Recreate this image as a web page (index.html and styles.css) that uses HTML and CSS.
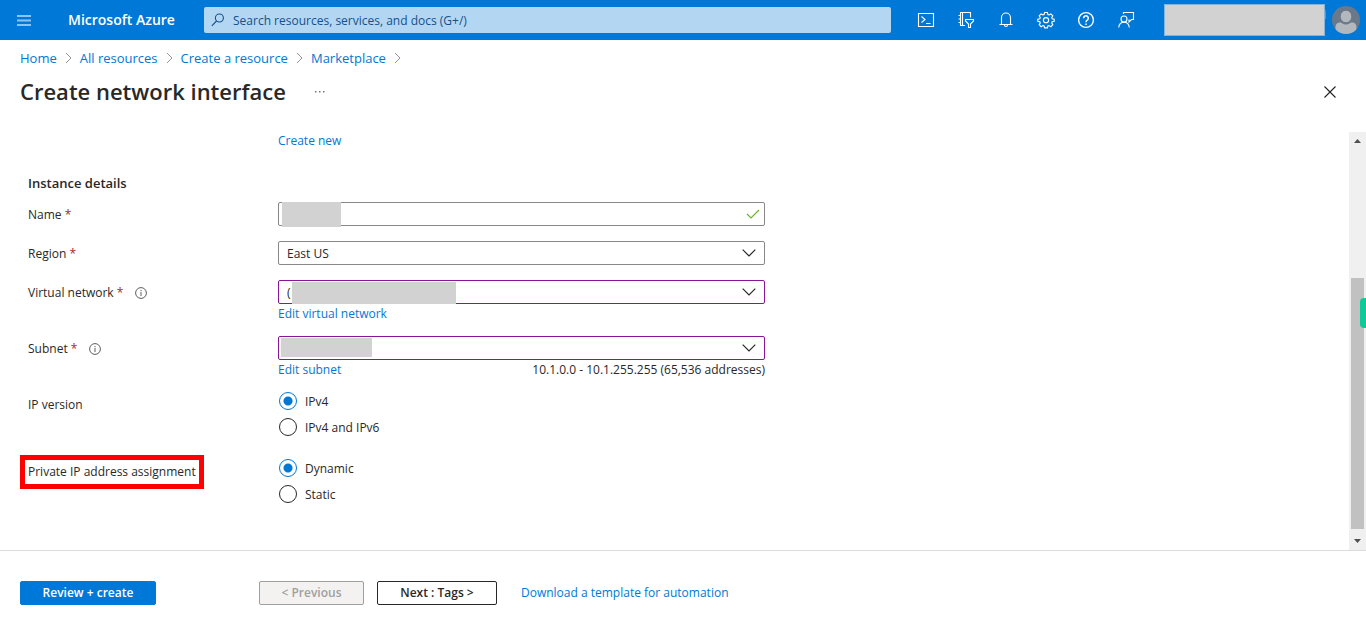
FILE: index.html
```html
<!DOCTYPE html>
<html lang="en">
<head>
<meta charset="utf-8">
<title>Create network interface - Microsoft Azure</title>
<link rel="stylesheet" href="styles.css">
</head>
<body>
<header class="topbar">
  <button class="icon-btn menu-btn" type="button" aria-label="Show portal menu">
    <svg width="14" height="11" viewBox="0 0 14 11"><path d="M0 1h14M0 5.500h14M0 10h14" stroke="#8fc4ee" stroke-width="1.800"/></svg>
  </button>
  <a class="brand" href="#">Microsoft Azure</a>
  <div class="search">
    <svg width="14" height="14" viewBox="0 0 14 14" fill="none" stroke="#15508a" stroke-width="1.1"><circle cx="8.4" cy="5" r="4"/><path d="M5.5 8 .8 12.8"/></svg>
    <input class="search-input" type="text" aria-label="Search" placeholder="Search resources, services, and docs (G+/)">
  </div>
  <nav class="tools" aria-label="Tools">
    <button class="icon-btn" type="button" aria-label="Cloud Shell"><svg width="18" height="18" viewBox="0 0 18 18"><path d="M1.5 2.5h15v13h-15zM4.500 5.500l3.500 3-3.500 3M9 12.500h4.500"/></svg></button>
    <button class="icon-btn" type="button" aria-label="Directories and subscriptions"><svg width="18" height="18" viewBox="0 0 18 18"><path d="M8 14.500H3.500V1.500h10v5M5.500 1.500v13M1.500 4.500h2M1.500 8h2M1.500 11.500h2M8.500 8.500h8v1.500l-3 3v3.500h-2V13l-3-3z"/></svg></button>
    <button class="icon-btn" type="button" aria-label="Notifications"><svg width="18" height="18" viewBox="0 0 18 18"><path d="M4.500 13.500V6.500a4.500 4.500 0 0 1 9 0v7M2.500 13.500h13M7.500 14a1.500 1.500 0 0 0 3 0"/></svg></button>
    <button class="icon-btn" type="button" aria-label="Settings"><svg width="18" height="18" viewBox="0 0 18 18"><path d="M7.600 1.500h2.800l.5 2 1.100.5 1.900-1.100 1.900 1.900L14.700 6.800l.5 1 2 .5v2l-2 .5-.5 1.100 1.100 1.800-1.900 2-1.900-1.200-1.100.5-.5 1.900H7.600l-.5-1.900-1.100-.5-1.900 1.200-1.900-2 1.100-1.800-.5-1.100-2-.5v-2l2-.5.500-1-1.100-2 1.900-1.900L6 4l1.100-.5z"/><circle cx="9" cy="9.200" r="2.600"/></svg></button>
    <button class="icon-btn" type="button" aria-label="Help"><svg width="18" height="18" viewBox="0 0 18 18"><circle cx="9" cy="9" r="7.400" stroke-width="1.400"/><path d="M6.700 7.200a2.300 2.300 0 1 1 3.800 1.700C9.600 9.600 9 10 9 11.200M9 12.400v1.500" stroke-width="1.500"/></svg></button>
    <button class="icon-btn" type="button" aria-label="Feedback"><svg width="18" height="18" viewBox="0 0 18 18"><path d="M6.500 3V1.500h10v7h-2l-2.500 2.500v-2.500"/><circle cx="7" cy="8" r="3"/><path d="M1.700 16.500c.3-3.300 2.300-5.300 5.300-5.300s5 2 5.300 5.300"/></svg></button>
  </nav>
  <div class="account">
    <div class="account-name"><span class="name-tail">i</span><div class="mask account-mask"></div></div>
    <svg class="avatar" width="28" height="28" viewBox="0 0 28 28" role="img" aria-label="Account"><clipPath id="disc"><circle cx="14" cy="14" r="14"/></clipPath><g clip-path="url(#disc)"><path d="M0 0h28v28H0z" fill="#69798a"/><path d="M3.500 28v-6c0-4 1.500-5.500 5-5.500 1 0 2.500 2 5.500 2s4.500-2 5.500-2c3.500 0 5 1.500 5 5.500v6z" fill="#b2b8bd"/><ellipse cx="14" cy="10.500" rx="5.800" ry="6.300" fill="#b2b8bd" stroke="#69798a"/></g></svg>
  </div>
</header>

<nav class="breadcrumb" aria-label="Breadcrumb">
  <a href="#">Home</a><svg class="crumb" viewBox="0 0 7 12"><path d="M1 1l5 5-5 5"/></svg>
  <a href="#">All resources</a><svg class="crumb" viewBox="0 0 7 12"><path d="M1 1l5 5-5 5"/></svg>
  <a href="#">Create a resource</a><svg class="crumb" viewBox="0 0 7 12"><path d="M1 1l5 5-5 5"/></svg>
  <a href="#">Marketplace</a><svg class="crumb" viewBox="0 0 7 12"><path d="M1 1l5 5-5 5"/></svg>
</nav>
<div class="title-row">
  <h1>Create network interface</h1>
  <button class="icon-btn more" type="button" aria-label="More"><svg width="12" height="2" viewBox="0 0 12 2"><path d="M1 0h1.500v1.500H1zM5 0h1.500v1.500H5zM9 0h1.500v1.500H9z" fill="#777"/></svg></button>
  <button class="icon-btn close" type="button" aria-label="Close"><svg width="12" height="12" viewBox="0 0 12 12"><path d="m.5.5 11 11M11.500.5l-11 11" stroke="#222" stroke-width="1.100"/></svg></button>
</div>

<div class="workspace">
  <main class="form">
    <div class="row create-row"><a class="sub-link" href="#">Create new</a></div>
    <h2>Instance details</h2>
    <div class="row">
      <div class="label"><label for="name">Name <span class="req">*</span></label></div>
      <div class="field">
        <input class="control" id="name" type="text">
        <span class="mask name-mask"></span>
        <svg class="check" width="14" height="10" viewBox="0 0 14 10"><path d="m1 5 4 4 8-8" fill="none" stroke="#6bb52f" stroke-width="1.200"/></svg>
      </div>
    </div>
    <div class="row">
      <div class="label"><label for="region">Region <span class="req">*</span></label></div>
      <div class="field">
        <select class="control" id="region"><option>East US</option></select>
        <svg class="chevron" width="14" height="8" viewBox="0 0 14 8"><path d="m.7.7 6.300 6.300L13.300.7"/></svg>
      </div>
    </div>
    <div class="row">
      <div class="label"><label for="vnet">Virtual network <span class="req">*</span></label>
        <svg class="info" viewBox="0 0 12 12"><circle cx="6" cy="6" r="5.400"/><path d="M6 5v4M6 3v1.200"/></svg></div>
      <div>
        <div class="field">
          <select class="control edited" id="vnet"><option>(</option></select>
          <span class="mask vnet-mask"></span>
          <svg class="chevron" width="14" height="8" viewBox="0 0 14 8"><path d="m.7.7 6.300 6.300L13.300.7"/></svg>
        </div>
        <div class="below"><a class="sub-link" href="#">Edit virtual network</a></div>
      </div>
    </div>
    <div class="row">
      <div class="label"><label for="subnet">Subnet <span class="req">*</span></label>
        <svg class="info" viewBox="0 0 12 12"><circle cx="6" cy="6" r="5.400"/><path d="M6 5v4M6 3v1.200"/></svg></div>
      <div>
        <div class="field">
          <select class="control edited" id="subnet"><option></option></select>
          <span class="mask subnet-mask"></span>
          <svg class="chevron" width="14" height="8" viewBox="0 0 14 8"><path d="m.7.7 6.300 6.300L13.300.7"/></svg>
        </div>
        <div class="below"><a class="sub-link" href="#">Edit subnet</a><span>10.1.0.0 - 10.1.255.255 (65,536 addresses)</span></div>
      </div>
    </div>
    <div class="row radio-row" role="radiogroup" aria-labelledby="ipv">
      <div class="label" id="ipv">IP version</div>
      <div class="radios">
        <label><input type="radio" name="ipv" checked><span>IPv4</span></label>
        <label><input type="radio" name="ipv"><span>IPv4 and IPv6</span></label>
      </div>
    </div>
    <div class="row" role="radiogroup" aria-labelledby="assign">
      <div class="label"><span class="highlight" id="assign">Private IP address assignment</span></div>
      <div class="radios">
        <label><input type="radio" name="assign" checked><span>Dynamic</span></label>
        <label><input type="radio" name="assign"><span>Static</span></label>
      </div>
    </div>
  </main>
  <div class="scrollbar" aria-hidden="true">
    <svg class="arrow" viewBox="0 0 17 17"><path d="M5 11h7L8.500 7z"/></svg>
    <div class="track"><div class="thumb"></div></div>
    <svg class="arrow" viewBox="0 0 17 17"><path d="M5 6h7l-3.500 4z"/></svg>
    <div class="side-tab"></div>
  </div>
</div>

<footer class="actions">
  <button class="btn primary" type="button">Review + create</button>
  <button class="btn previous" type="button" disabled>&lt; Previous</button>
  <button class="btn next" type="button">Next : Tags &gt;</button>
  <a href="#">Download a template for automation</a>
</footer>
</body>
</html>
```
FILE: styles.css
```css
* { box-sizing: border-box; }
body {
  margin: 0;
  height: 100vh;
  display: flex;
  flex-direction: column;
  background: #fff;
  color: #292827;
  font: 12px/18px "Segoe UI", "Open Sans", "Noto Sans", sans-serif;
}
a { color: #0078d4; text-decoration: none; }
button, input, select { font: inherit; color: inherit; }
svg { display: block; flex: none; }
.icon-btn {
  display: flex;
  align-items: center;
  justify-content: center;
  padding: 0;
  border: 0;
  background: none;
}
.mask { background: #d2d2d2; }

.topbar {
  display: flex;
  align-items: center;
  flex: none;
  height: 40px;
  background: #0078d7;
}
.menu-btn { width: 48px; height: 40px; }
.brand {
  width: 136px;
  margin-left: 20px;
  color: #fff;
  font-size: 14px;
  font-weight: 600;
  white-space: nowrap;
}
.search {
  display: flex;
  align-items: center;
  gap: 8px;
  flex: 1;
  height: 26px;
  padding: 0 7px;
  border-radius: 2px;
  background: #b3d7f3;
}
.search-input {
  flex: 1;
  padding: 2px 0 0;
  border: 0;
  outline: 0;
  background: none;
}
.search-input::placeholder { color: #15508a; opacity: 1; }
.tools { display: flex; margin: 0 18px 0 15px; }
.tools .icon-btn { width: 40px; height: 40px; }
.tools svg { fill: none; stroke: #fff; stroke-width: 1.1; }
.account { display: flex; align-items: center; gap: 7px; padding-right: 6px; }
.account-name { position: relative; }
.name-tail { position: absolute; right: -1px; top: 2px; color: #fff; }
.account-mask { position: relative; width: 161px; height: 32px; border: 1px solid #86b5dc; }

.breadcrumb {
  display: flex;
  align-items: center;
  gap: 8px;
  padding: 9px 20px;
  font-size: 13px;
}
.crumb { width: 7px; height: 12px; fill: none; stroke: #979593; }
.title-row {
  display: flex;
  align-items: center;
  height: 32px;
  padding: 0 30px 0 20px;
}
h1 { margin: 0; padding-bottom: 2px; font-size: 22px; line-height: 30px; font-weight: 600; }
.more { margin-left: 28px; }
.close { margin-left: auto; }

.workspace {
  display: flex;
  flex: 1;
  min-height: 0;
  margin-top: 24px;
}
.form { flex: 1; padding-left: 28px; overflow: hidden; }
.row {
  display: grid;
  grid-template-columns: 250px minmax(0, 487px);
  margin-bottom: 15px;
}
.create-row { margin-bottom: 25px; }
.create-row .sub-link { grid-column: 2; }
.radio-row { margin-bottom: 23px; }
.sub-link { line-height: 17px; }
h2 { margin: 0 0 10px; font-size: 13px; line-height: 18px; font-weight: 600; }
.label {
  display: flex;
  align-items: center;
  height: 24px;
  padding-top: 2px;
  white-space: nowrap;
}
.req { color: #a4262c; }
.info {
  width: 12px;
  height: 12px;
  margin-left: 12px;
  fill: none;
  stroke: #605e5c;
}
.field { position: relative; height: 24px; }
.control {
  display: block;
  width: 100%;
  height: 24px;
  padding: 2px 8px 0;
  border: 1px solid #8a8886;
  border-radius: 2px;
  outline: 0;
  background: #fff;
  appearance: none;
}
.edited { border-color: #881798; }
.field > .mask { position: absolute; }
.name-mask { left: 4px; top: 0; width: 59px; height: 25px; }
.vnet-mask { left: 14px; top: 2px; width: 164px; height: 22px; }
.subnet-mask { left: 3px; top: 2px; width: 91px; height: 19px; }
.check { position: absolute; right: 5px; top: 7px; }
.chevron {
  position: absolute;
  right: 9px;
  top: 8px;
  fill: none;
  stroke: #292827;
  stroke-width: 1.2;
  pointer-events: none;
}
.below { display: flex; justify-content: space-between; height: 17px; padding-top: 1px; line-height: 17px; }
.radios { display: flex; flex-direction: column; gap: 8px; }
.radios label { display: flex; align-items: center; gap: 8px; height: 18px; }
.radios span { padding-top: 2px; }
.radios input {
  width: 18px;
  height: 18px;
  margin: 0 0 0 1px;
  border: 1px solid #292827;
  border-radius: 50%;
  appearance: none;
}
.radios input:checked {
  border-color: #0078d4;
  background: radial-gradient(circle, #0078d4 4px, #fff 5px);
}
.highlight { margin-top: -1px; outline: 5px solid #f00; outline-offset: 3px; }

.scrollbar {
  position: relative;
  display: flex;
  flex-direction: column;
  width: 17px;
  background: #f0f0f0;
}
.arrow { width: 17px; height: 17px; fill: #505050; }
.track {
  display: flex;
  flex-direction: column;
  justify-content: flex-end;
  flex: 1;
  padding: 0 2px 4px;
}
.thumb { height: 66%; background: #c1c1c1; }
.side-tab {
  position: absolute;
  right: 0;
  top: 166px;
  width: 6px;
  height: 30px;
  border-radius: 4px 0 0 4px;
  background: #0fca98;
}

.actions {
  display: flex;
  align-items: center;
  flex: none;
  height: 75px;
  padding: 10px 20px 0;
  border-top: 1px solid #dcdcdc;
}
.btn {
  height: 24px;
  padding: 0;
  border: 1px solid #292827;
  border-radius: 2px;
  background: #fff;
  font-weight: 600;
}
.primary { width: 136px; border-color: #0078d7; background: #0078d7; color: #fff; }
.previous {
  width: 105px;
  margin-left: 103px;
  border-color: #a19f9d;
  background: #f3f2f1;
  color: #a19f9d;
}
.next { width: 120px; margin: 0 24px 0 13px; }
```
